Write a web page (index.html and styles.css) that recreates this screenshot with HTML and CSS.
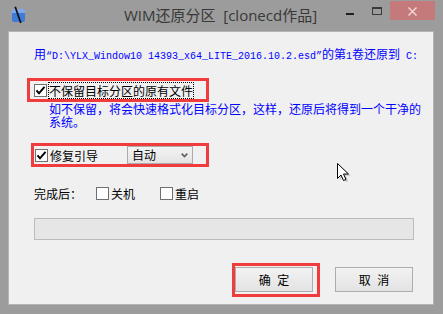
FILE: index.html
```html
<!DOCTYPE html>
<html lang="zh-CN">
<head>
<meta charset="utf-8">
<title>WIM还原分区</title>
<link rel="stylesheet" href="styles.css">
</head>
<body>
<div class="window">
  <div class="titlebar">
    <div class="app-icon">
      <div class="app-square"></div>
      <svg class="app-stick" width="14" height="18" viewBox="0 0 14 18">
        <path d="M3.2 0.8 L8.8 17" stroke="#111" stroke-width="1.7" fill="none"/>
      </svg>
    </div>
    <div class="title">WIM还原分区&nbsp;&nbsp;[clonecd作品]</div>
    <div class="tb-right">
      <span class="btn-min"></span>
      <span class="btn-max"></span>
      <span class="btn-close">
        <svg width="45" height="19" viewBox="0 0 45 19">
          <path d="M18.5 6.5 L26.5 14.5 M26.5 6.5 L18.5 14.5" stroke="#f2d6d6" stroke-width="1.5" fill="none"/>
        </svg>
      </span>
    </div>
  </div>

  <div class="client">
    <p class="path">用<span class="mono">“D:\YLX_Window10 14393_x64_LITE_2016.10.2.esd”</span>的第<span class="mono">1</span>卷还原到<span class="mono"> C:</span></p>

    <div class="mark mark-keep">
      <svg class="check" width="13" height="13" viewBox="0 0 13 13"><rect x="0.5" y="0.5" width="12" height="12" fill="#fff" stroke="#707070"/><path d="M2.5 6.3 L5 9.3 L10.5 2.8" stroke="#000" stroke-width="2" fill="none"/></svg>
      <span class="focus-label">不保留目标分区的原有文件</span>
    </div>

    <p class="desc"><span class="desc-line">如不保留，将会快速格式化目标分区，这样，还原后将得到一个干净的</span><span class="desc-line">系统。</span></p>

    <div class="mark mark-boot">
      <svg class="check" width="13" height="13" viewBox="0 0 13 13"><rect x="0.5" y="0.5" width="12" height="12" fill="#fff" stroke="#707070"/><path d="M2.5 6.3 L5 9.3 L10.5 2.8" stroke="#000" stroke-width="2" fill="none"/></svg>
      <span class="lbl">修复引导</span>
      <div class="select">
        <span>自动</span>
        <svg width="7" height="5" viewBox="0 0 7 5"><path d="M0.7 0.7 L3.5 3.6 L6.3 0.7" stroke="#606060" stroke-width="1.7" fill="none"/></svg>
      </div>
    </div>

    <div class="finish">
      <span class="finish-label">完成后：</span>
      <svg class="check" width="13" height="13" viewBox="0 0 13 13"><rect x="0.5" y="0.5" width="12" height="12" fill="#fff" stroke="#707070"/></svg>
      <span class="lbl">关机</span>
      <svg class="check check-2" width="13" height="13" viewBox="0 0 13 13"><rect x="0.5" y="0.5" width="12" height="12" fill="#fff" stroke="#707070"/></svg>
      <span class="lbl">重启</span>
    </div>

    <div class="progress"></div>

    <div class="buttons">
      <div class="mark mark-ok">
        <button class="btn">确 定</button>
      </div>
      <button class="btn btn-cancel">取 消</button>
    </div>
  </div>

  <svg class="cursor" width="14" height="19" viewBox="0 0 14 19">
    <path d="M1.5 1.5 L1.5 16.5 L5 13 L7.5 18.5 L10 17.5 L7.5 12 L12.5 12 Z" fill="#888" opacity="0.35" transform="translate(1.2,0.8)"/>
    <path d="M0.5 0.5 L0.5 15.5 L4 12 L6.5 17.5 L9 16.5 L6.5 11 L11.5 11 Z" fill="#fff" stroke="#000" stroke-width="1"/>
  </svg>
</div>
</body>
</html>
```

FILE: styles.css
```css
html, body {
  margin: 0;
  padding: 0;
}
body {
  width: 443px;
  height: 314px;
  overflow: hidden;
  background: #9c9c9c;
  font-family: "Noto Sans CJK SC", "Noto Sans", sans-serif;
}
.window {
  position: relative;
  width: 443px;
  height: 314px;
  background: #9c9c9c;
}
.titlebar {
  height: 31px;
  display: grid;
  grid-template-columns: 1fr auto 1fr;
  align-items: start;
  padding: 0 8px 0 12px;
  box-sizing: border-box;
}
.app-icon {
  position: relative;
  justify-self: start;
  width: 14px;
  height: 18px;
  margin-top: 6px;
}
.app-square {
  margin-top: 3px;
  width: 13px;
  height: 13px;
  border-radius: 2px;
  background-color: #3f7ad6;
  border-top: 4px solid #7ea9ea;
  box-sizing: border-box;
}
.app-stick {
  position: absolute;
  left: 0;
  top: 0;
}
.title {
  font-family: "Open Sans", "Noto Sans CJK SC", sans-serif;
  font-size: 15px;
  line-height: 20px;
  padding-top: 5px;
  margin-right: 6px;
  color: #383838;
  white-space: nowrap;
}
.tb-right {
  display: flex;
  justify-content: flex-end;
  align-items: flex-start;
}
.btn-min {
  width: 8px;
  height: 2px;
  background: #1e1e1e;
  margin-top: 13px;
  margin-right: 18px;
}
.btn-max {
  width: 10px;
  height: 8px;
  box-sizing: border-box;
  border: 1px solid #3a3a3a;
  border-top-width: 2px;
  margin-top: 7px;
  margin-right: 8px;
}
.btn-close {
  width: 45px;
  height: 19px;
  margin-top: 1px;
  background: #c47a7a;
}
.btn-close svg {
  display: block;
}

.client {
  margin-left: 8px;
  width: 426px;
  height: 274px;
  box-sizing: border-box;
  background: #f0f0f0;
  border: 1px solid #b4b4b4;
  padding: 16px 0 0 25px;
  font-size: 12px;
  color: #000;
}
.path {
  margin: 0;
  line-height: 12px;
  height: 12px;
  color: #0000ff;
  white-space: nowrap;
  font-size: 12px;
}
.mono {
  font-family: "Liberation Mono", monospace;
  font-size: 10px;
}
.mark {
  border: 3px solid #f03c3c;
  box-sizing: border-box;
  display: flex;
  align-items: center;
}
.check {
  display: block;
  flex: none;
}
.mark-keep {
  margin-top: 18px;
  margin-left: -7px;
  width: 182px;
  height: 24px;
  padding-left: 4px;
}
.focus-label {
  margin-left: 1px;
  border: 1px dotted #000;
  line-height: 15px;
  height: 15px;
  width: 144px;
  white-space: nowrap;
}
.desc {
  margin: 0 0 0 15px;
  color: #0000ff;
  white-space: nowrap;
  display: flex;
  flex-direction: column;
}
.desc-line {
  display: block;
  height: 12px;
  line-height: 12px;
  font-size: 12px;
  padding-top: 1px;
}
.mark-boot {
  margin-top: 15px;
  margin-left: -3px;
  width: 178px;
  height: 24px;
  padding-left: 1px;
}
.lbl {
  margin-left: 2px;
  line-height: 13px;
  white-space: nowrap;
}
.select {
  margin-left: 29px;
  width: 66px;
  height: 18px;
  box-sizing: border-box;
  border: 1px solid #acacac;
  background: linear-gradient(#f3f3f3, #e4e4e4);
  display: flex;
  align-items: center;
  justify-content: space-between;
  padding: 0 4px 0 4px;
  line-height: 14px;
}
.select svg {
  display: block;
}
.finish {
  margin-top: 20px;
  height: 13px;
  display: flex;
  align-items: center;
}
.finish-label {
  width: 62px;
  line-height: 13px;
  white-space: nowrap;
}
.check-2 {
  margin-left: 25px;
}
.progress {
  margin-top: 18px;
  width: 380px;
  height: 22px;
  box-sizing: border-box;
  border: 1px solid #bcbcbc;
  background: #e6e6e6;
}
.buttons {
  margin-top: 23px;
  margin-left: 198px;
  display: flex;
  align-items: flex-start;
}
.mark-ok {
  width: 88px;
  height: 34px;
  padding: 1px 4px 2px 0;
  align-items: flex-start;
}
.btn {
  width: 78px;
  height: 25px;
  box-sizing: border-box;
  margin: 0;
  padding: 0;
  border: 1px solid #adadad;
  background: linear-gradient(#f2f2f2, #e3e3e3);
  font-family: "Noto Sans CJK SC", sans-serif;
  font-size: 12px;
  line-height: 14px;
  color: #000;
  word-spacing: 4px;
  flex: none;
}
.btn-cancel {
  margin-left: 15px;
  margin-top: 4px;
}
.cursor {
  position: absolute;
  left: 337px;
  top: 163px;
}
```
